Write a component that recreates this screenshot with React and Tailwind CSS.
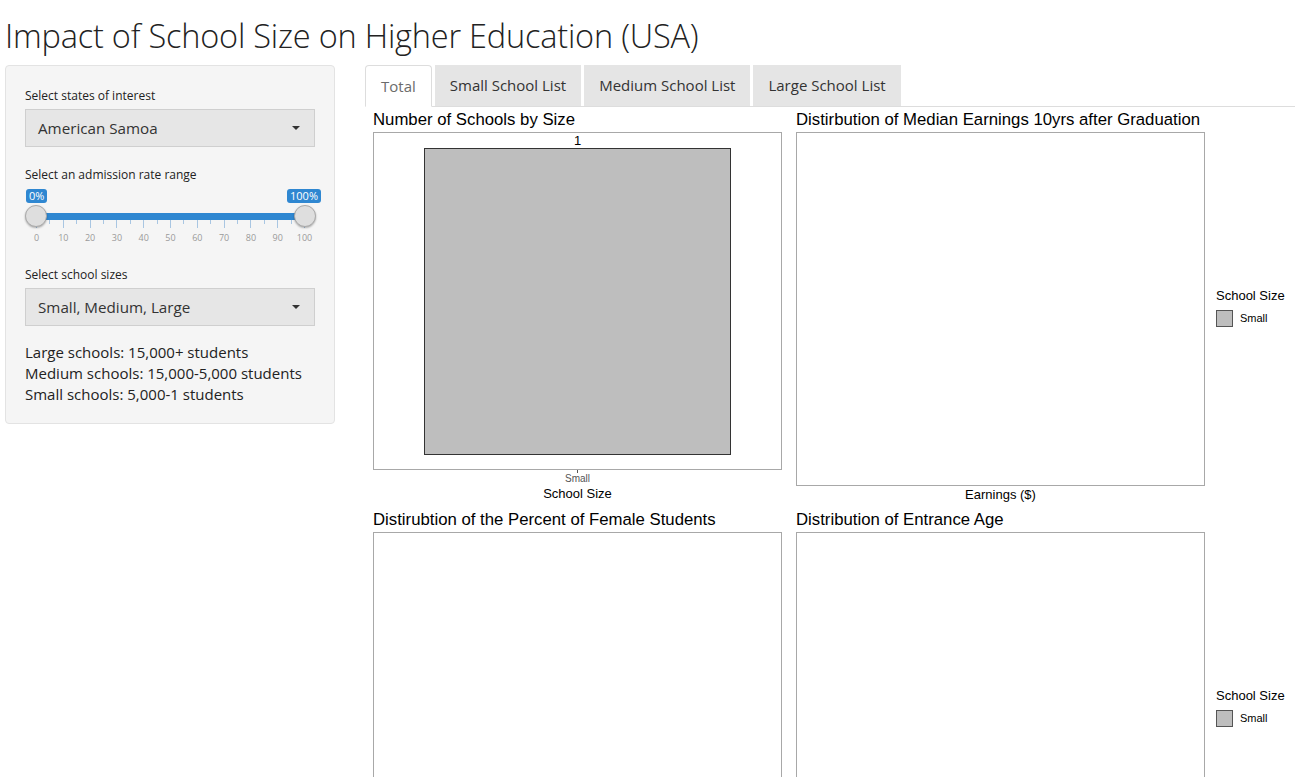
import React from "react";

const ticks = Array.from({ length: 21 }, (_, i) => i);

function Select({ value }) {
  return (
    <div className="h-[38px] w-full bg-[#e6e6e6] border border-[#cfcfcf] flex items-center justify-between pl-[12px] pr-[14px] text-[15.2px] text-[#333]">
      <span>{value}</span>
      <span className="w-0 h-0 border-l-[4px] border-r-[4px] border-t-[4px] border-l-transparent border-r-transparent border-t-[#333]" />
    </div>
  );
}

function Slider() {
  const x0 = 11;
  const step = 26.8 / 2;
  return (
    <div className="relative h-[66px] w-full mt-[2px]">
      <div className="absolute left-[1px] top-[4px] h-[14px] px-[3px] rounded-[3px] bg-[#2f87d1] text-white text-[11px] leading-[14px]">0%</div>
      <div className="absolute right-[-6px] top-[4px] h-[14px] px-[3px] rounded-[3px] bg-[#2f87d1] text-white text-[11px] leading-[14px]">100%</div>
      <div className="absolute left-[11px] right-[10px] top-[28px] h-[7px] bg-[#2f87d1]" />
      {ticks.map((i) => (
        <div
          key={i}
          className={`absolute w-px bg-[#a9c6e2] top-[35px] ${i % 2 === 0 ? "h-[8px]" : "h-[4px]"}`}
          style={{ left: x0 + i * step }}
        />
      ))}
      {ticks.filter((i) => i % 2 === 0).map((i) => (
        <div
          key={"n" + i}
          className="absolute top-[47px] w-[30px] -ml-[15px] text-center text-[9px] leading-[12px] text-[#9a9a9a]"
          style={{ left: x0 + 0.5 + i * step }}
        >
          {i * 5}
        </div>
      ))}
      <div className="absolute left-0 top-[20px] w-[22px] h-[22px] rounded-full bg-[#dedede] border border-[#aaaaaa] shadow-[0_1px_2px_rgba(0,0,0,0.3)]" />
      <div className="absolute right-[-1px] top-[20px] w-[22px] h-[22px] rounded-full bg-[#dedede] border border-[#aaaaaa] shadow-[0_1px_2px_rgba(0,0,0,0.3)]" />
    </div>
  );
}

function Legend() {
  return (
    <div className="flex flex-col pl-[11px] mb-[3px] font-['Liberation_Sans',Arial,sans-serif]">
      <div className="text-[13px] leading-[16px] text-black">School Size</div>
      <div className="flex items-center mt-[6px] gap-[7px]">
        <div className="w-[17px] h-[17px] bg-[#bebebe] border border-[#555]" />
        <div className="text-[11px] text-black">Small</div>
      </div>
    </div>
  );
}

function Tab({ label, active }) {
  return active ? (
    <div className="h-[42px] px-[15px] flex items-center bg-white border border-[#dddddd] border-b-white rounded-t-[4px] text-[15px] text-[#6b6b6b] -mb-px">
      {label}
    </div>
  ) : (
    <div className="h-[41px] px-[15px] flex items-center bg-[#e5e5e5] text-[15px] text-[#333]">
      {label}
    </div>
  );
}

export default function App() {
  return (
    <div className="w-[1315px] h-[777px] overflow-hidden bg-white font-['Open_Sans',sans-serif] text-[#333]">
      <div className="h-[65px] pl-[5px] pt-[16px]">
        <h1 className="text-[32.5px] leading-[40px] font-light text-[#222] tracking-[-0.2px]">
          Impact of School Size on Higher Education (USA)
        </h1>
      </div>
      <div className="flex pl-[5px]">
        <div className="w-[330px] shrink-0">
          <div className="bg-[#f5f5f5] border border-[#e3e3e3] rounded-[4px] px-[19px] pt-[21px] pb-[18px]">
            <div className="text-[12px] leading-[17px] mb-[5px] text-[#222]">Select states of interest</div>
            <Select value="American Samoa" />
            <div className="text-[12px] leading-[17px] mt-[19px] text-[#222]">Select an admission rate range</div>
            <Slider />
            <div className="text-[12px] leading-[17px] mt-[15px] mb-[5px] text-[#222]">Select school sizes</div>
            <Select value="Small, Medium, Large" />
            <div className="mt-[16px] text-[15px] leading-[21px] text-[#222]">
              <div>Large schools: 15,000+ students</div>
              <div>Medium schools: 15,000-5,000 students</div>
              <div>Small schools: 5,000-1 students</div>
            </div>
          </div>
        </div>
        <div className="ml-[30px] w-[930px] flex flex-col">
          <div className="flex items-end gap-[3px] border-b border-[#dddddd] h-[42px]">
            <Tab label="Total" active />
            <Tab label="Small School List" />
            <Tab label="Medium School List" />
            <Tab label="Large School List" />
          </div>
          <div className="pl-[8px] pt-[2px] font-['Liberation_Sans',Arial,sans-serif] text-black">
            {/* Row 1 */}
            <div className="flex h-[400px]">
              <div className="w-[423px] flex flex-col">
                <div className="text-[16.75px] leading-[22px] h-[23px] whitespace-nowrap">Number of Schools by Size</div>
                <div className="w-[409px] h-[338px] border border-[#a8a8a8] flex flex-col pl-[50px] pr-[50px] pb-[14px]">
                  <div className="h-[15px] text-center text-[13px] leading-[15px]">1</div>
                  <div className="flex-1 bg-[#bebebe] border border-[#333]" />
                </div>
                <div className="w-[409px] flex flex-col items-center">
                  <div className="w-px h-[3px] bg-[#555]" />
                  <div className="text-[10px] leading-[11px] text-[#555]">Small</div>
                  <div className="text-[13px] leading-[16px] mt-[2px]">School Size</div>
                </div>
              </div>
              <div className="flex-1 flex flex-col">
                <div className="text-[16.75px] leading-[22px] h-[23px] whitespace-nowrap">Distirbution of Median Earnings 10yrs after Graduation</div>
                <div className="flex items-center">
                  <div className="w-[409px] h-[354px] border border-[#a8a8a8]" />
                  <Legend />
                </div>
                <div className="w-[409px] text-center text-[13px] leading-[16px] mt-[1px]">Earnings ($)</div>
              </div>
            </div>
            {/* Row 2 */}
            <div className="flex">
              <div className="w-[423px] flex flex-col">
                <div className="text-[16.75px] leading-[22px] h-[23px] whitespace-nowrap">Distirubtion of the Percent of Female Students</div>
                <div className="w-[409px] h-[354px] border border-[#a8a8a8]" />
              </div>
              <div className="flex-1 flex flex-col">
                <div className="text-[16.75px] leading-[22px] h-[23px] whitespace-nowrap">Distribution of Entrance Age</div>
                <div className="flex items-center">
                  <div className="w-[409px] h-[354px] border border-[#a8a8a8]" />
                  <Legend />
                </div>
              </div>
            </div>
          </div>
        </div>
      </div>
    </div>
  );
}
